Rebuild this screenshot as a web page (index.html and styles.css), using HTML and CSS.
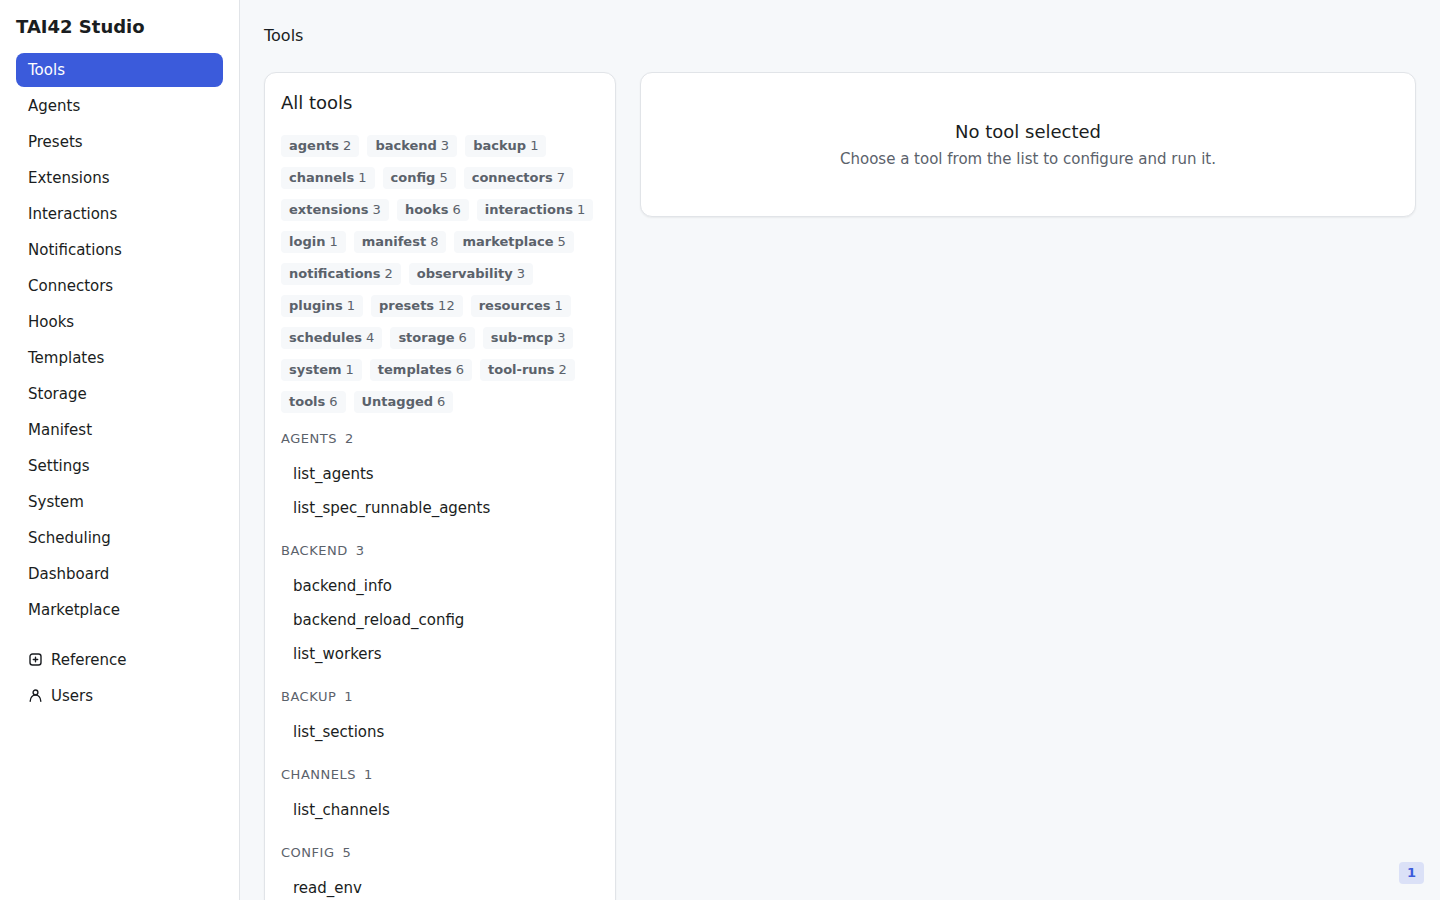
FILE: index.html
```html
<!DOCTYPE html>
<html lang="en">
<head>
  <meta charset="UTF-8">
  <meta name="viewport" content="width=device-width, initial-scale=1.0">
  <title>TAI42 Studio</title>
  <link rel="stylesheet" href="styles.css">
</head>
<body>
  <div class="app">
    <aside class="sidebar">
      <div class="brand">TAI42 Studio</div>
      <nav class="nav">
        <a class="active" href="#tools" aria-current="page">Tools</a>
        <a href="#agents">Agents</a>
        <a href="#presets">Presets</a>
        <a href="#extensions">Extensions</a>
        <a href="#interactions">Interactions</a>
        <a href="#notifications">Notifications</a>
        <a href="#connectors">Connectors</a>
        <a href="#hooks">Hooks</a>
        <a href="#templates">Templates</a>
        <a href="#storage">Storage</a>
        <a href="#manifest">Manifest</a>
        <a href="#settings">Settings</a>
        <a href="#system">System</a>
        <a href="#scheduling">Scheduling</a>
        <a href="#dashboard">Dashboard</a>
        <a href="#marketplace">Marketplace</a>
      </nav>
      <nav class="nav">
        <a href="#reference">
          <svg class="icon" viewBox="0 0 15 15" aria-hidden="true">
            <rect x="2" y="1" width="11" height="11" rx="2.5"/>
            <path d="M7.5 4.300v4.400M5.300 6.500h4.400"/>
          </svg>
          Reference
        </a>
        <a href="#users">
          <svg class="icon" viewBox="0 0 15 15" aria-hidden="true">
            <circle cx="7.5" cy="3.400" r="2.400"/>
            <path d="M2.200 12.200C2.400 8.500 4.600 6 7.500 6s5.100 2.500 5.300 6.200"/>
          </svg>
          Users
        </a>
      </nav>
    </aside>

    <main class="main">
      <h1>Tools</h1>
      <div class="columns">
        <section class="card tools">
          <h2>All tools</h2>
          <div class="chips">
            <button class="chip"><b>agents</b> 2</button>
            <button class="chip"><b>backend</b> 3</button>
            <button class="chip"><b>backup</b> 1</button>
            <button class="chip"><b>channels</b> 1</button>
            <button class="chip"><b>config</b> 5</button>
            <button class="chip"><b>connectors</b> 7</button>
            <button class="chip"><b>extensions</b> 3</button>
            <button class="chip"><b>hooks</b> 6</button>
            <button class="chip"><b>interactions</b> 1</button>
            <button class="chip"><b>login</b> 1</button>
            <button class="chip"><b>manifest</b> 8</button>
            <button class="chip"><b>marketplace</b> 5</button>
            <button class="chip"><b>notifications</b> 2</button>
            <button class="chip"><b>observability</b> 3</button>
            <button class="chip"><b>plugins</b> 1</button>
            <button class="chip"><b>presets</b> 12</button>
            <button class="chip"><b>resources</b> 1</button>
            <button class="chip"><b>schedules</b> 4</button>
            <button class="chip"><b>storage</b> 6</button>
            <button class="chip"><b>sub-mcp</b> 3</button>
            <button class="chip"><b>system</b> 1</button>
            <button class="chip"><b>templates</b> 6</button>
            <button class="chip"><b>tool-runs</b> 2</button>
            <button class="chip"><b>tools</b> 6</button>
            <button class="chip"><b>Untagged</b> 6</button>
          </div>

          <div class="group">
            <h3>agents <span>2</span></h3>
            <button class="tool">list_agents</button>
            <button class="tool">list_spec_runnable_agents</button>
          </div>
          <div class="group">
            <h3>backend <span>3</span></h3>
            <button class="tool">backend_info</button>
            <button class="tool">backend_reload_config</button>
            <button class="tool">list_workers</button>
          </div>
          <div class="group">
            <h3>backup <span>1</span></h3>
            <button class="tool">list_sections</button>
          </div>
          <div class="group">
            <h3>channels <span>1</span></h3>
            <button class="tool">list_channels</button>
          </div>
          <div class="group">
            <h3>config <span>5</span></h3>
            <button class="tool">read_env</button>
          </div>
        </section>

        <section class="card empty">
          <h2>No tool selected</h2>
          <p>Choose a tool from the list to configure and run it.</p>
        </section>
      </div>
    </main>
  </div>
  <button class="badge">1</button>
</body>
</html>
```
FILE: styles.css
```css
* { box-sizing: border-box; }
body {
  margin: 0; font-family: "DejaVu Sans", sans-serif; font-size: 15px; line-height: 22px;
  background: #f6f8fa; color: #1a1d21;
}
h1, h2, h3, p { margin: 0; font-weight: normal; }
button { font: inherit; color: inherit; border: 0; background: none; cursor: pointer; }

.app { display: flex; min-height: 100vh; }

/* sidebar */
.sidebar {
  width: 240px; flex-shrink: 0; padding: 16px; background: #fff; border-right: 1px solid #e1e4e8;
  display: flex; flex-direction: column; gap: 16px;
  position: sticky; top: 0; height: 100vh;
}
.brand { font-size: 18px; line-height: 21px; font-weight: bold; }
.nav { display: flex; flex-direction: column; gap: 2px; }
.nav a {
  display: flex; align-items: center; gap: 8px; padding: 6px 12px;
  border-radius: 8px; color: inherit; text-decoration: none;
}
.nav a:hover { background: #f6f8fa; }
.nav a.active { background: #3b5bdb; color: #fff; }
.icon { width: 15px; height: 15px; fill: none; stroke: currentColor; stroke-width: 1.4; stroke-linecap: round; }

/* content */
.main { flex: 1; min-width: 0; padding: 24px; }
h1 { font-size: 16px; line-height: 24px; margin-bottom: 24px; }
h2 { font-size: 18px; line-height: 27px; }
.columns { display: grid; grid-template-columns: 22rem 1fr; gap: 24px; align-items: start; }
.card {
  background: #fff; border: 1px solid #e1e4e8; border-radius: 12px; padding: 16px;
  box-shadow: 0 1px 2px rgba(0, 0, 0, 0.06);
}
.tools { display: flex; flex-direction: column; gap: 16px; }
.tools h2 { margin-bottom: 3px; }
.chips { display: flex; flex-wrap: wrap; gap: 10px 8px; }
.chip {
  display: inline-flex; gap: 4px; padding: 2px 8px; font-size: 13px; line-height: 18px;
  border-radius: 4px; background: #f6f8fa; color: #5b626b;
}
.chip:hover { background: #e1e4e8; }

.group { display: flex; flex-direction: column; }
.group h3 {
  display: flex; gap: 8px; margin-bottom: 8px; font-size: 13px; line-height: 20px;
  text-transform: uppercase; letter-spacing: 0.04em; color: #5b626b;
}
.tool { padding: 6px 12px; text-align: left; border-radius: 8px; }
.tool:hover { background: #f6f8fa; }

.empty { padding: 46px 16px; text-align: center; }
.empty h2 { line-height: 25px; margin-bottom: 4px; }
.empty p { color: #5b626b; }

.badge {
  position: fixed; right: 16px; bottom: 16px; padding: 2px 8px;
  font-size: 13px; line-height: 18px; font-weight: bold; border-radius: 4px;
  background: #dbe1f7; color: #3b5bdb;
}
```
